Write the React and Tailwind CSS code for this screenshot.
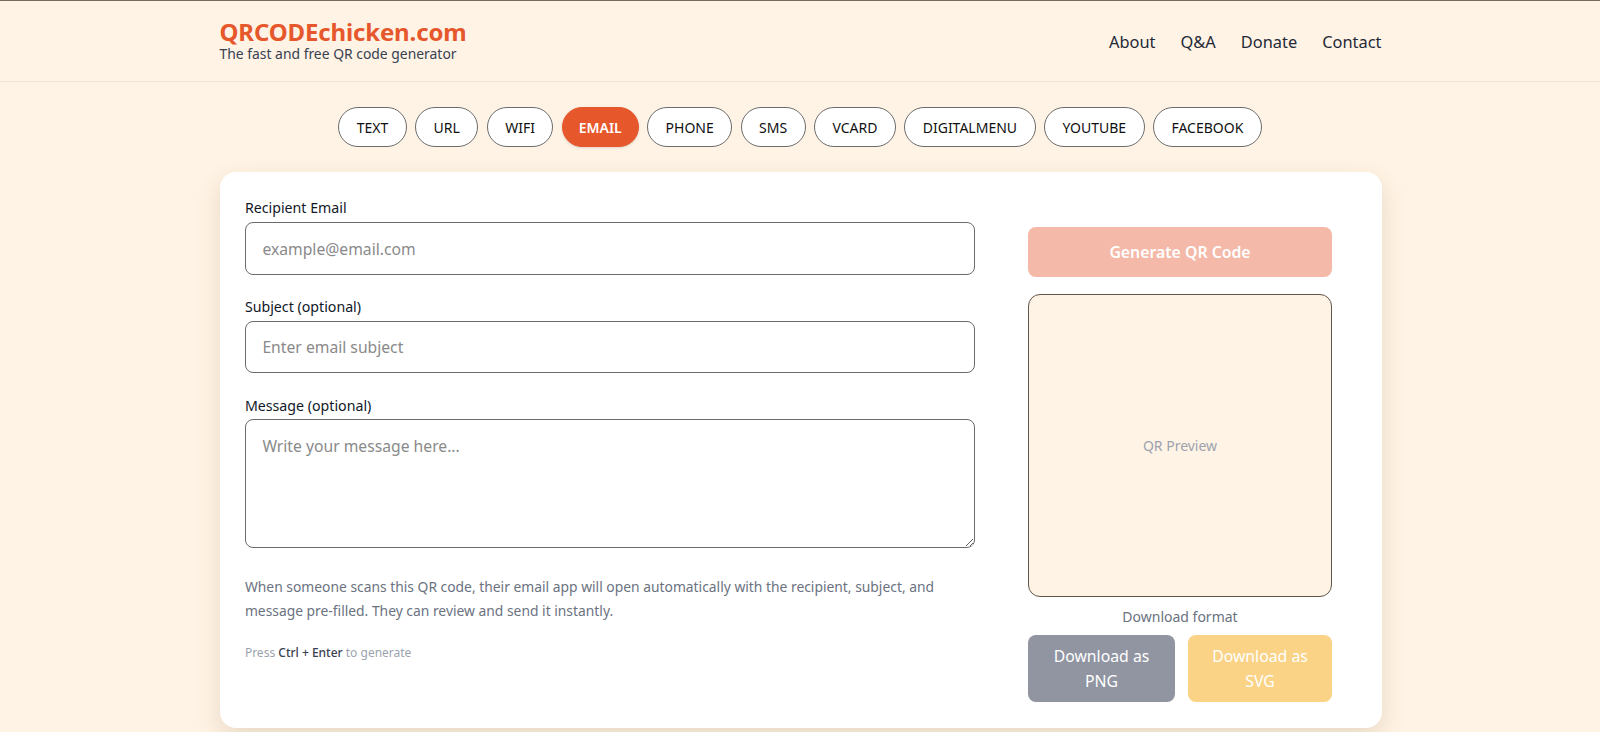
const tabs = ["TEXT", "URL", "WIFI", "EMAIL", "PHONE", "SMS", "VCARD", "DIGITALMENU", "YOUTUBE", "FACEBOOK"];

export default function App() {
  return (
    <div className="h-[732px] overflow-hidden bg-[#fff3e5] text-[#111827] font-['Noto_Sans',sans-serif]">
      <header className="h-[82px] border-t border-t-[#7a6a5c] border-b border-b-[#ece4da]">
        <div className="w-[1162px] ml-[219.5px] flex items-center justify-between h-full">
          <div className="flex flex-col">
            <span className="text-[24px] leading-[24px] font-bold text-[#e6572c] tracking-[-0.15px]">QRCODEchicken.com</span>
            <span className="text-[13.9px] leading-[19px] text-[#374151]">The fast and free QR code generator</span>
          </div>
          <nav className="flex gap-[25px] text-[16.4px] text-[#1f2937] pt-[2px]">
            <a>About</a><a>Q&amp;A</a><a>Donate</a><a>Contact</a>
          </nav>
        </div>
      </header>
      <div className="flex justify-center gap-[8.3px] mt-[25px]">
        {tabs.map((t) => (
          <button
            key={t}
            className={t === "EMAIL"
              ? "h-[40px] px-[16px] rounded-full text-[14px] font-semibold bg-[#e6572c] text-white border border-[#e6572c] shadow-sm"
              : "h-[40px] px-[17.5px] rounded-full text-[14px] bg-white text-[#111111] border border-[#6b6b6b]"}
          >{t}</button>
        ))}
      </div>
      <main className="w-[1162.5px] h-[556px] ml-[219.5px] mt-[25px] bg-white rounded-[16px] shadow-[0_10px_24px_rgba(120,90,40,0.16)] pl-[25.4px] pr-[26px] pt-[26px] flex justify-between">
        <div className="w-[730px] flex flex-col">
          <label className="text-[14.2px] leading-[20px] mb-[4px]">Recipient Email</label>
          <input placeholder="example@email.com" className="h-[53px] px-[16.5px] rounded-[8px] border border-[#6b6b6b] text-[15.7px] placeholder:text-[#8a8a8a] outline-none" />
          <label className="text-[14.2px] leading-[20px] mt-[22px] mb-[4px]">Subject (optional)</label>
          <input placeholder="Enter email subject" className="h-[52px] px-[16.5px] rounded-[8px] border border-[#6b6b6b] text-[15.7px] placeholder:text-[#8a8a8a] outline-none" />
          <label className="text-[14.2px] leading-[20px] mt-[23px] mb-[3px]">Message (optional)</label>
          <textarea placeholder="Write your message here..." className="h-[129px] px-[16.5px] py-[15px] rounded-[8px] border border-[#6b6b6b] text-[15.7px] placeholder:text-[#8a8a8a] outline-none" />
          <p className="mt-[27px] text-[13.85px] leading-[24px] text-[#6b7280]">When someone scans this QR code, their email app will open automatically with the recipient, subject, and message pre-filled. They can review and send it instantly.</p>
          <p className="mt-[22px] text-[12px] leading-[16px] text-[#9ca3af]">Press <span className="font-medium text-[#374151]">Ctrl + Enter</span> to generate</p>
        </div>
        <div className="w-[304px] mr-[24px] mt-[29px] flex flex-col">
          <button className="h-[50px] pt-[2px] rounded-[8px] bg-[#f4b9a8] text-white text-[15.8px] font-semibold">Generate QR Code</button>
          <div className="mt-[17px] h-[303px] rounded-[12px] border border-[#5f5548] bg-[#fff3e5] flex items-center justify-center text-[14px] text-[#9ca3af]">QR Preview</div>
          <div className="mt-[10px] text-center text-[14px] leading-[20px] text-[#6b7280]">Download format</div>
          <div className="mt-[8px] flex justify-between">
            <button className="w-[147px] h-[67px] pt-[1px] rounded-[8px] bg-[#9095a1] text-white text-[15.8px] leading-[25.5px] px-4">Download as PNG</button>
            <button className="w-[144px] h-[67px] pt-[1px] rounded-[8px] bg-[#fad387] text-white text-[15.8px] leading-[25.5px] px-4">Download as SVG</button>
          </div>
        </div>
      </main>
    </div>
  );
}
